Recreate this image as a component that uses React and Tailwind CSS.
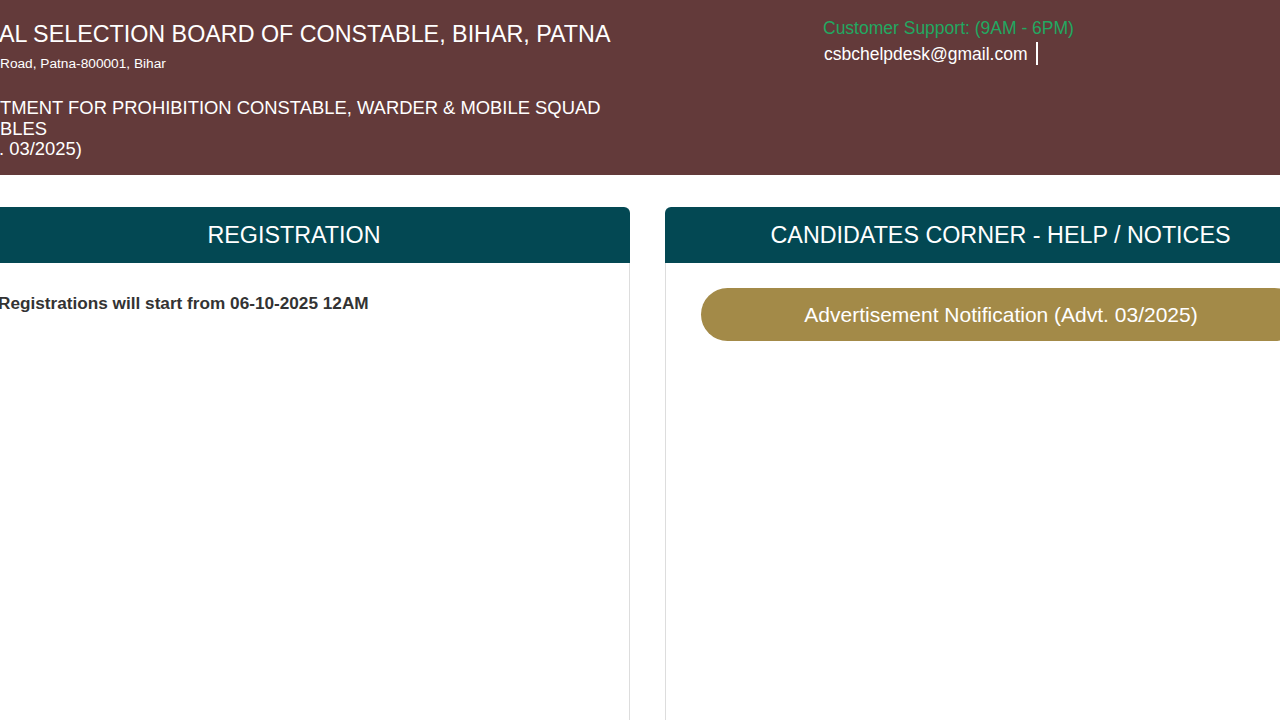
import React from 'react';

function App() {
  return (
    <div className="w-[1280px] h-[720px] overflow-hidden bg-white font-['Liberation_Sans',Arial,sans-serif]">
      <header className="h-[175px] bg-[#633a3a] flex">
        <div className="w-[823px] pt-[21px] text-white">
          <h1 className="text-[23.3px] leading-[27px] -ml-[1px]">AL SELECTION BOARD OF CONSTABLE, BIHAR, PATNA</h1>
          <p className="text-[13.7px] leading-[16px] mt-[8px]">Road, Patna-800001, Bihar</p>
          <div className="text-[18.4px] leading-[20.5px] mt-[26px]">
            <p>TMENT FOR PROHIBITION CONSTABLE, WARDER &amp; MOBILE SQUAD</p>
            <p>BLES</p>
            <p className="-ml-[1px]">. 03/2025)</p>
          </div>
        </div>
        <div className="pt-[17px]">
          <p className="text-[17.5px] leading-[22px] text-[#22a861]">Customer Support: (9AM - 6PM)</p>
          <div className="flex items-center mt-[3px]">
            <span className="text-[17.5px] leading-[22px] text-white pl-[1px]">csbchelpdesk@gmail.com</span>
            <span className="ml-[8px] w-[2px] h-[23px] bg-white"></span>
          </div>
        </div>
      </header>

      <div className="flex gap-[35px] mt-[32px] -ml-[42px] w-[1400px]">
        <section className="w-[672px] shrink-0">
          <div className="h-[56px] bg-[#034853] rounded-t-[6px] flex items-center justify-center">
            <h2 className="text-[23.3px] text-white">REGISTRATION</h2>
          </div>
          <div className="h-[500px] border-r border-[#dddddd] pt-[28px] pl-[40px]">
            <p className="text-[17.2px] font-bold text-[#333333]">Registrations will start from 06-10-2025 12AM</p>
          </div>
        </section>

        <section className="w-[671px] shrink-0">
          <div className="h-[56px] bg-[#034853] rounded-t-[6px] flex items-center justify-center">
            <h2 className="text-[23.3px] text-white">CANDIDATES CORNER - HELP / NOTICES</h2>
          </div>
          <div className="h-[500px] border-l border-[#dddddd] pt-[25px] px-[35px]">
            <button className="w-full h-[53px] rounded-full bg-[#a38a48] text-white text-[21px]">
              Advertisement Notification (Advt. 03/2025)
            </button>
          </div>
        </section>
      </div>
    </div>
  );
}

export default App;
